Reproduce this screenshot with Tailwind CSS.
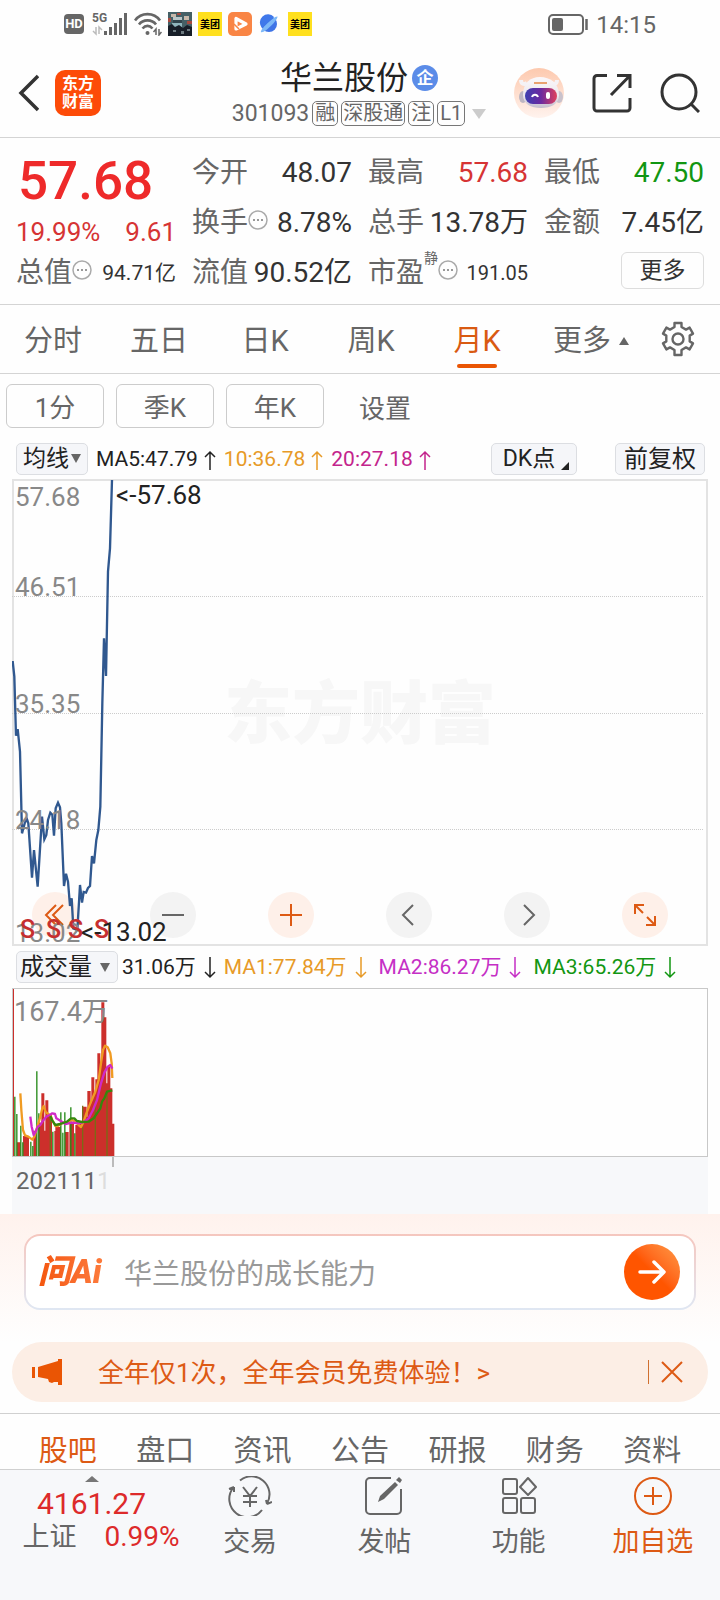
<!DOCTYPE html>
<html lang="zh-CN">
<head>
<meta charset="utf-8">
<meta name="viewport" content="width=device-width, initial-scale=1">
<title>华兰股份 301093</title>
<script src="https://cdn.jsdelivr.net/npm/@tailwindcss/browser@4"></script>
</head>
<body class="min-h-screen bg-[#fefefe] font-[Roboto,'Noto_Sans_CJK_SC',sans-serif] text-[#666]">
<div class="flex min-h-screen flex-col">

<!-- Status bar -->
<div class="flex h-12 items-center justify-between pl-16 pr-16">
  <div class="flex items-center gap-1.5">
    <span class="flex h-5 w-5 items-center justify-center rounded-sm bg-[#666] text-[13px] font-bold text-white">HD</span>
    <svg class="ml-0.5" width="36" height="24" viewBox="0 0 36 24"><text x="0" y="10" font-size="12" font-weight="700" fill="#666">5G</text><path d="M4 15v7l-3-3M7 22v-7l3 3" fill="none" stroke="#bbb" stroke-width="1.5"/><path d="M13.500 19v4M18.500 15v8M23.500 11v12M28.500 6v17M33.500 1v22" stroke="#666" stroke-width="3"/></svg>
    <svg width="28" height="24" viewBox="0 0 28 24" fill="none" stroke="#666" stroke-width="2.600"><path d="M1 8.500C7 0 20 0 26 8.500M5 12.500c4-5.500 13-5.500 17 0M8.500 16.500c3-3.500 7-3.500 10 0"/><circle cx="13.500" cy="21" r="2" fill="#666" stroke="none"/><path d="M22 23v-6l-2.500 3M25 17v6l2.500-3" stroke-width="1.500"/></svg>
    <svg width="24" height="24" viewBox="0 0 24 24"><path fill="#456066" d="M0 0h24v24H0z"/><path fill="#c7b8aa" d="M3 2h5v3H3zM16 4h5v4h-5z"/><path fill="#a64a40" d="M0 6h3v4H0zM19 9h5v3h-5zM9 1h4v2H9z"/><path fill="#b9c6c8" d="M5 5h9v3H5z"/><path fill="#31454e" d="M5 8h9v3H5z"/><path fill="#8fb5bd" d="M4 11h10v4H4z"/><path fill="#171e28" d="M0 14l4-2 3 3 4-2 4 3 4-3 5 2v9H0z"/><path fill="#6c7a80" d="M5 18h3v2H5zM13 19h3v3h-3zM19 17h3v2h-3z"/></svg>
    <span class="flex h-6 w-6 items-center justify-center bg-[#ffe01e] text-[10px] font-bold text-black">美团</span>
    <svg width="24" height="24" viewBox="0 0 24 24"><rect width="24" height="24" rx="5" fill="#f98545"/><path d="M8 6.500v10.500l10-5z" fill="none" stroke="#fff" stroke-width="3.200" stroke-linejoin="round"/><path d="M6 12l5 5" stroke="#f98545" stroke-width="1.500"/></svg>
    <svg width="24" height="24" viewBox="0 0 24 24"><circle cx="11" cy="12" r="8" fill="#3f74e6"/><path d="M3 20C1 18 17 3 19.500 4.500 20 8 6 22 3 20z" fill="#7db8f7"/><path d="M4 16a8 8 0 0 1 12-11z" fill="#3f78ea"/></svg>
    <span class="flex h-6 w-6 items-center justify-center bg-[#ffe01e] text-[10px] font-bold text-black">美团</span>
  </div>
  <div class="flex items-center gap-2 pt-0.5">
    <svg width="40" height="22" viewBox="0 0 40 22"><rect x="1" y="1" width="34" height="19" rx="4" fill="none" stroke="#666" stroke-width="2"/><rect x="4" y="4" width="11" height="13" rx="2" fill="#666"/><path d="M38.500 5v11" stroke="#666" stroke-width="2.500"/></svg>
    <span class="text-[24px] leading-6">14:15</span>
  </div>
</div>

<!-- Title bar -->
<header class="grid h-[90px] grid-cols-[1fr_auto_1fr] items-center border-b border-[#d4d4d4] pl-[18px] pr-5">
  <div class="flex items-center gap-4">
    <button aria-label="返回"><svg width="21" height="38" viewBox="0 0 21 38" fill="none" stroke="#333" stroke-width="3.500"><path d="M20 2L3 19l17 17"/></svg></button>
    <a href="#" class="flex h-[46px] w-[46px] flex-col items-center justify-center rounded-[10px] bg-[#fd4b08] text-[16px] leading-[18px] font-bold text-white"><span>东方</span><span>财富</span></a>
  </div>
  <div class="flex flex-col items-center gap-1">
    <h1 class="flex items-center gap-1 text-[32px] leading-[38px] text-[#222]">华兰股份<span class="flex h-[26px] w-[26px] items-center justify-center rounded-full bg-[#5b8ce8] text-[17px] font-bold leading-none text-white">企</span></h1>
    <div class="flex items-center gap-[3px] text-[20px] leading-[23px]">
      <span class="text-[23px]">301093</span>
      <span class="rounded-[5px] border border-[#777] px-0.5">融</span>
      <span class="rounded-[5px] border border-[#777] px-px">深股通</span>
      <span class="rounded-[5px] border border-[#777] px-0.5">注</span>
      <span class="rounded-[5px] border border-[#777] px-0.5">L1</span>
      <svg class="ml-1" width="14" height="10" viewBox="0 0 14 10"><path d="M0 0h14L7 10z" fill="#ccc"/></svg>
    </div>
  </div>
  <div class="flex items-center justify-end gap-7">
    <button aria-label="智能助手"><svg width="50" height="50" viewBox="0 0 50 50"><defs><linearGradient id="face" x1="0" x2="1"><stop offset="0" stop-color="#3c3fb0"/><stop offset=".5" stop-color="#6b2aa0"/><stop offset="1" stop-color="#e0405c"/></linearGradient><linearGradient id="halo" x1="0" y1="0" x2="0" y2="1"><stop offset="0" stop-color="#fdc9ae"/><stop offset="1" stop-color="#fff3ee"/></linearGradient><linearGradient id="shell" x1="0" y1="0" x2="0" y2="1"><stop offset="0" stop-color="#fbf8fa"/><stop offset=".6" stop-color="#ece8ee"/><stop offset="1" stop-color="#c4becd"/></linearGradient></defs><circle cx="25" cy="25" r="25" fill="url(#halo)"/><path d="M7 12c0 4 3 5 6 3M43 12c0 4-3 5-6 3" fill="none" stroke="#f5f2f5" stroke-width="4"/><ellipse cx="9" cy="29" rx="4" ry="6" fill="#bdb6c2"/><ellipse cx="45" cy="29" rx="4" ry="6" fill="#c9c2cc"/><path d="M9 27C9 15 16 9 26 9s19 6 19 18c0 9-8 13-18 13S9 36 9 27z" fill="url(#shell)"/><path d="M20 14h13v2H20z" fill="#e9a270"/><rect x="11" y="20" width="32" height="16" rx="8" fill="url(#face)"/><path d="M18 29c1-3 5-3 6 0" fill="none" stroke="#fff" stroke-width="2"/><rect x="32" y="24" width="4" height="7" rx="2" fill="#fff"/></svg></button>
    <button aria-label="分享"><svg width="40" height="40" viewBox="0 0 40 40" fill="none" stroke="#333" stroke-width="3"><path d="M15 2.500H5a3 3 0 0 0-3 3V35a3 3 0 0 0 3 3h30a3 3 0 0 0 3-3V25M25 2.500h13V15M38 2.500L19 22"/></svg></button>
    <button aria-label="搜索"><svg width="40" height="40" viewBox="0 0 40 40" fill="none" stroke="#333" stroke-width="3"><circle cx="19" cy="19" r="17"/><path d="M31 31l8 8"/></svg></button>
  </div>
</header>

<!-- Quote summary -->
<section class="grid h-[167px] grid-cols-4 grid-rows-[50px_50px_50px] gap-x-4 border-b border-[#d4d4d4] px-4 pt-2.5 text-[28px] leading-[50px] whitespace-nowrap">
  <div class="row-span-2 flex flex-col">
    <strong class="pl-0.5 text-[53px] leading-[66px] font-medium text-[#ee2a2a]">57.68</strong>
    <div class="flex justify-between text-[26px] leading-9 text-[#d63434]"><span>19.99%</span><span>9.61</span></div>
  </div>
  <div class="flex justify-between"><span>今开</span><span class="text-[#333]">48.07</span></div>
  <div class="flex justify-between"><span>最高</span><span class="text-[#d63434]">57.68</span></div>
  <div class="flex justify-between"><span>最低</span><span class="text-[#129612]">47.50</span></div>
  <div class="flex justify-between"><span class="flex">换手<svg class="mt-3" width="20" height="20" viewBox="0 0 20 20"><circle cx="10" cy="10" r="9" fill="none" stroke="#aaa" stroke-width="1.500"/><path d="M5 9h2v2H5zM9 9h2v2H9zM13 9h2v2h-2z" fill="#999"/></svg></span><span class="text-[#333]">8.78%</span></div>
  <div class="flex justify-between"><span>总手</span><span class="text-[#333]">13.78万</span></div>
  <div class="flex justify-between"><span>金额</span><span class="text-[#333]">7.45亿</span></div>
  <div class="flex justify-between"><span class="flex">总值<svg class="mt-3" width="20" height="20" viewBox="0 0 20 20"><circle cx="10" cy="10" r="9" fill="none" stroke="#aaa" stroke-width="1.500"/><path d="M5 9h2v2H5zM9 9h2v2H9zM13 9h2v2h-2z" fill="#999"/></svg></span><span class="text-[21px] text-[#333]">94.71亿</span></div>
  <div class="flex justify-between"><span>流值</span><span class="text-[#333]">90.52亿</span></div>
  <div class="flex justify-between"><span class="flex">市盈<sup class="top-0 text-[14px] leading-5">静</sup><svg class="mt-3" width="20" height="20" viewBox="0 0 20 20"><circle cx="10" cy="10" r="9" fill="none" stroke="#aaa" stroke-width="1.500"/><path d="M5 9h2v2H5zM9 9h2v2H9zM13 9h2v2h-2z" fill="#999"/></svg></span><span class="text-[20px] text-[#333]">191.05</span></div>
  <div class="flex items-start justify-end pt-1"><button class="h-[37px] w-[83px] rounded-md border border-[#ddd] text-[23px] leading-[33px] text-[#333]">更多</button></div>
</section>

<!-- Period tabs -->
<nav class="grid h-[69px] grid-cols-[repeat(6,106fr)_84fr] border-b border-[#d4d4d4] pt-1 text-[29px] leading-[64px]">
  <button>分时</button>
  <button>五日</button>
  <button>日K</button>
  <button>周K</button>
  <button class="relative text-[#d95a12]">月K<span class="absolute bottom-[5px] left-1/2 h-1 w-10 -translate-x-1/2 rounded-full bg-[#ea5504]"></span></button>
  <button class="flex items-center justify-center gap-2 pl-4">更多<svg width="10" height="8" viewBox="0 0 10 8"><path d="M0 8h10L5 0z" fill="#666"/></svg></button>
  <button class="flex items-center justify-center pb-1" aria-label="图表设置"><svg width="36" height="36" viewBox="0 0 36 36" fill="none" stroke="#666" stroke-width="2.400" stroke-linejoin="round"><path d="M14.500 2h7v4l4.500 2.600 3.600-2 3.400 6-3.300 2v5.800l3.300 2-3.400 6-3.600-2L21.500 29v5h-7v-5L10 26.400l-3.600 2-3.400-6 3.300-2v-5.800l-3.300-2 3.400-6 3.600 2L14.500 6z"/><circle cx="18" cy="18" r="5.500"/></svg></button>
</nav>

<!-- Custom periods -->
<div class="flex gap-3 px-1.5 pt-2.5 text-[26px] leading-[42px]">
  <button class="h-11 w-[98px] rounded-md border border-[#ccc] pt-0.5">1分</button>
  <button class="h-11 w-[98px] rounded-md border border-[#ccc] pt-0.5">季K</button>
  <button class="h-11 w-[98px] rounded-md border border-[#ccc] pt-0.5">年K</button>
  <button class="h-11 w-[98px] pt-1">设置</button>
</div>

<!-- Moving averages -->
<div class="flex h-[51px] items-center gap-2 pl-4 pr-[15px] pt-2.5 text-[21px] whitespace-nowrap">
  <button class="flex h-8 w-[72px] items-center justify-center gap-0.5 rounded-[5px] border border-[#dcdee2] bg-[#f5f6f9] text-[23px] leading-7 text-[#222]">均线<svg width="10" height="9" viewBox="0 0 10 9"><path d="M0 0h10L5 9z" fill="#666"/></svg></button>
  <span class="flex items-center gap-1.5 pt-0.5 text-[#222]">MA5:47.79<svg width="12" height="20" viewBox="0 0 12 20" fill="none" stroke="currentColor" stroke-width="1.500"><path d="M6 20V2M1 7l5-5 5 5"/></svg></span>
  <span class="flex items-center gap-1.5 pt-0.5 text-[#e79a27]">10:36.78<svg width="12" height="20" viewBox="0 0 12 20" fill="none" stroke="currentColor" stroke-width="1.500"><path d="M6 20V2M1 7l5-5 5 5"/></svg></span>
  <span class="flex items-center gap-1.5 pt-0.5 text-[#c3248c]">20:27.18<svg width="12" height="20" viewBox="0 0 12 20" fill="none" stroke="currentColor" stroke-width="1.500"><path d="M6 20V2M1 7l5-5 5 5"/></svg></span>
  <button class="ml-auto flex h-8 w-[86px] items-center justify-center gap-1.5 rounded-[5px] border border-[#dcdee2] bg-[#f5f6f9] pl-1 text-[23px] leading-7 text-[#222]">DK点<svg class="mt-3.5" width="8" height="8" viewBox="0 0 8 8"><path d="M8 0v8H0z" fill="#222"/></svg></button>
  <button class="ml-[30px] h-8 w-[90px] rounded-[5px] border border-[#dcdee2] bg-[#f5f6f9] text-[24px] leading-7 text-[#222]">前复权</button>
</div>

<!-- Price chart -->
<div class="relative mx-3 h-[467px] border-2 border-[#e3e3e3]">
  <div class="flex h-full items-center justify-center pt-1 text-[68px] font-black text-[#f7f7f7]">东方财富</div>
  <div class="absolute bottom-1.5 left-[18px] right-[38px] flex justify-between">
    <button aria-label="最早" class="flex h-[46px] w-[46px] items-center justify-center rounded-full bg-[#fef0e9]"><svg width="22" height="22" viewBox="0 0 22 22" fill="none" stroke="#dd5a14" stroke-width="2"><path d="M12 1L2 11l10 10M19 1L9 11l10 10"/></svg></button>
    <button aria-label="缩小" class="flex h-[46px] w-[46px] items-center justify-center rounded-full bg-[#f3f3f3]"><svg width="22" height="22" viewBox="0 0 22 22" stroke="#666" stroke-width="2"><path d="M0 11h22"/></svg></button>
    <button aria-label="放大" class="flex h-[46px] w-[46px] items-center justify-center rounded-full bg-[#fef0e9]"><svg width="22" height="22" viewBox="0 0 22 22" stroke="#dd5a14" stroke-width="2"><path d="M0 11h22M11 0v22"/></svg></button>
    <button aria-label="左移" class="flex h-[46px] w-[46px] items-center justify-center rounded-full bg-[#f3f3f3]"><svg width="22" height="22" viewBox="0 0 22 22" fill="none" stroke="#666" stroke-width="2"><path d="M15 1L5 11l10 10"/></svg></button>
    <button aria-label="右移" class="flex h-[46px] w-[46px] items-center justify-center rounded-full bg-[#f3f3f3]"><svg width="22" height="22" viewBox="0 0 22 22" fill="none" stroke="#666" stroke-width="2"><path d="M8 1l10 10L8 21"/></svg></button>
    <button aria-label="全屏" class="flex h-[46px] w-[46px] items-center justify-center rounded-full bg-[#fef0e9]"><svg width="22" height="22" viewBox="0 0 22 22" fill="none" stroke="#dd5a14" stroke-width="2"><path d="M1 10V1h9M1 1l8 8M12 21h9v-9M21 21l-8-8"/></svg></button>
  </div>
  <svg class="pointer-events-none absolute -top-0.5 -left-0.5 overflow-visible" width="100%" height="467" font-size="26">
    <g stroke="#ccc" stroke-dasharray="1 1"><line y1="117.500" x2="100%" y2="117.500"/><line y1="234.500" x2="100%" y2="234.500"/><line y1="350.500" x2="100%" y2="350.500"/></g>
    <svg width="104" height="466" viewBox="36 27 312 1398"><polyline fill="none" stroke="#30588f" stroke-width="7" points="38,573 43,620 48,797 53,777 60,845 66,1090 74,1060 80,1045 85,1060 96,1223 102,1140 113,1250 126,1040 133,1108 139,1095 144,1050 151,1028 157,1034 162,1097 167,1015 174,998 180,1012 184,1060 192,1248 198,1211 204,1235 210,1308 215,1285 220,1375 232,1380 240,1245 246,1298 251,1266 258,1268 264,1254 270,1248 276,1158 282,1180 289,1110 295,1080 301,1010 307,700 312,505 318,618 324,305 330,235 336,30"/></svg>
    <g fill="#888"><text x="3" y="27">57.68</text><text x="3" y="117">46.51</text><text x="3" y="234">35.35</text><text x="3" y="350">24.18</text><text x="3" y="463">13.02</text></g>
    <g fill="#c62f2f" font-size="25" font-weight="500"><text x="8" y="459">S</text><text x="34" y="459">S</text><text x="56" y="459">S</text><text x="82" y="459">S</text></g>
    <g fill="#222"><text x="104" y="25">&lt;-57.68</text><text x="69" y="462">&lt;-13.02</text></g>
  </svg>
</div>

<!-- Volume indicators -->
<div class="flex h-[42px] items-center gap-2 pl-4 text-[21px] whitespace-nowrap">
  <button class="flex h-8 w-[102px] items-center justify-center gap-2 rounded-[5px] border border-[#dcdee2] bg-[#f5f6f9] pr-1 text-[24px] leading-7 text-[#222]">成交量<svg width="10" height="9" viewBox="0 0 10 9"><path d="M0 0h10L5 9z" fill="#666"/></svg></button>
  <span class="-ml-1 flex items-center gap-2 pt-0.5 text-[#222]">31.06万<svg width="12" height="22" viewBox="0 0 12 22" fill="none" stroke="currentColor" stroke-width="1.500"><path d="M6 0v20M1 15l5 5 5-5"/></svg></span>
  <span class="flex items-center gap-2 pt-0.5 text-[#e79a27]">MA1:77.84万<svg width="12" height="22" viewBox="0 0 12 22" fill="none" stroke="currentColor" stroke-width="1.500"><path d="M6 0v20M1 15l5 5 5-5"/></svg></span>
  <span class="ml-1 flex items-center gap-2 pt-0.5 text-[#c52fc5]">MA2:86.27万<svg width="12" height="22" viewBox="0 0 12 22" fill="none" stroke="currentColor" stroke-width="1.500"><path d="M6 0v20M1 15l5 5 5-5"/></svg></span>
  <span class="ml-1 flex items-center gap-2 pt-0.5 text-[#129612]">MA3:65.26万<svg width="12" height="22" viewBox="0 0 12 22" fill="none" stroke="currentColor" stroke-width="1.500"><path d="M6 0v20M1 15l5 5 5-5"/></svg></span>
</div>

<!-- Volume chart -->
<div class="mx-3 h-[169px] border border-[#c8c8c8]">
  <svg width="100%" height="167">
    <svg width="104" height="167" viewBox="38 117 312 501">
      <path fill="#cc2f2b" d="M37 117h4v501h-4zM50 577h11v41H50zM68 558h18v60H68zM99 542h10v76H99zM114 518h9v100h-9zM123 430h9v188h-9zM132 542h4v76h-4zM135 451h9v167h-9zM144 492h11v126h-11zM162 543h4v75h-4zM165 531h16v87h-16zM194 546h11v72h-11zM207 520h14v98h-14zM225 525h12v93h-12zM236 520h12v98h-12zM248 470h11v148h-11zM259 500h3v118h-3zM261 423h10v195h-10zM270 460h4v158h-4zM273 382h9v236h-9zM282 430h4v188h-4zM285 388h6v230h-6zM291 310h9v308h-9zM300 340h4v278h-4zM303 157h9v461h-9zM312 202h6v416h-6zM318 400h3v218h-3zM321 350h9v268h-9zM330 415h6v203h-6zM336 521h6v97h-6z"/>
      <path stroke="#258a18" stroke-width="4" d="M43.500 440v178M49.500 492v126M61.500 527v91M67.500 577v41M91.500 575v43M97.500 588v30M109.500 364v254M115.500 490v128M157.500 545v73M181.500 487v131M187.500 548v70M193.500 487v131M211.500 472v146M223.500 550v68"/>
      <path stroke="#7b6a16" stroke-width="4" d="M247 467v151M285 450v168M320 425v193M150 495v123"/>
      <g fill="none" stroke-width="7" stroke-linejoin="round"><polyline stroke="#f09b22" points="60,430 63,480 68,540 74,556 84,560 96,569 102,560 108,540 114,520 120,500 126,475 130,468 136,486 144,492 150,495 156,510 165,528 172,528 185,519 200,517 215,510 225,515 235,525 242,531 250,515 258,490 270,460 285,425 295,390 302,340 308,300 314,287 322,292 330,310 334,340 336,384"/><polyline stroke="#d02ac6" points="90,500 94,530 100,555 106,545 112,530 120,525 128,512 138,500 148,495 156,490 164,492 168,505 180,512 195,522 215,518 235,520 250,516 265,505 278,480 290,450 302,400 312,368 322,350 330,345 336,356"/><polyline stroke="#34880c" points="150,498 156,512 165,525 180,522 200,515 212,505 222,505 230,513 245,516 265,515 280,505 290,490 300,475 305,455 312,445 320,425 336,421"/></g>
    </svg>
    <text x="1" y="32" font-size="27" fill="#888">167.4万</text>
  </svg>
</div>
<div class="mx-3 flex h-[57px] items-start bg-[#f7f8fa] text-[24px]">
  <span class="pt-1.5 pl-1">202111</span><span class="w-[15px] pt-1.5 text-[#ddd]">1</span>
  <span class="h-2.5 w-0.5 bg-[#bbb]"></span>
</div>

<!-- AI question box -->
<section class="bg-linear-to-b from-[#fff2ed] to-[#fefefe] px-6 pt-5 pb-8">
  <form class="rounded-2xl bg-linear-to-b from-[#f5c6be] to-[#dfe7f3] p-0.5">
    <div class="flex h-[72px] items-center rounded-[14px] bg-white pl-3 pr-3.5">
      <label for="ask" class="w-[86px] bg-linear-to-r from-[#f4560b] to-[#ff8546] bg-clip-text text-[33px] leading-10 font-black text-transparent italic">问Ai</label>
      <input id="ask" type="text" placeholder="华兰股份的成长能力" class="h-12 min-w-0 flex-1 pt-1 text-[28px] text-[#333] outline-none placeholder:text-[#999]">
      <button type="button" aria-label="提问" class="flex h-14 w-14 items-center justify-center rounded-full bg-linear-to-tr from-[#ff5500] from-50% to-[#ff9a45]"><svg width="28" height="26" viewBox="0 0 28 26" fill="none" stroke="#fff" stroke-width="3.500" stroke-linecap="round" stroke-linejoin="round"><path d="M2 13h23M16 3l10 10-10 10"/></svg></button>
    </div>
  </form>
</section>

<!-- Membership banner -->
<div class="mx-3 mb-[11px] flex h-[60px] items-center rounded-full bg-[#fceee5] pl-5 pr-[25px] text-[26px] text-[#dd5a14]">
  <svg width="31" height="26" viewBox="0 0 31 26" fill="#ea5504"><path d="M0 8h3v11H0zM6 8L26 2V0h4v26h-4v-3h-4l-2 1-3-1-1-3-5-1-5-1z"/></svg>
  <a href="#" class="ml-[35px] pt-0.5 whitespace-pre">全年仅1次，全年会员免费体验！&gt;</a>
  <span class="ml-auto h-6 w-px bg-[#d07030]"></span>
  <button aria-label="关闭" class="ml-3"><svg width="22" height="22" viewBox="0 0 22 22" stroke="#dd5a14" stroke-width="2"><path d="M1 1l20 20M21 1L1 21"/></svg></button>
</div>

<!-- Content tabs -->
<nav class="flex h-[57px] border-y border-[#d0d0d0] px-[19px] pt-2 text-center text-[29px] leading-[58px] whitespace-nowrap">
  <a href="#" class="flex-1 text-[#dd5a14]">股吧</a>
  <a href="#" class="flex-1">盘口</a>
  <a href="#" class="flex-1">资讯</a>
  <a href="#" class="flex-1">公告</a>
  <a href="#" class="flex-1">研报</a>
  <a href="#" class="flex-1">财务</a>
  <a href="#" class="flex-1">资料</a>
</nav>

<!-- Bottom bar -->
<footer class="flex flex-1 items-start bg-[#f7f8fa] pb-10 text-[27px]">
  <button class="flex w-[183px] flex-col items-center pt-1.5">
    <svg width="14" height="6" viewBox="0 0 14 6"><path d="M0 6h14L7 0z" fill="#777"/></svg>
    <span class="mt-1.5 text-[30px] leading-[32px] text-[#dd2a2a]">4161.27</span>
    <span class="flex gap-7 pl-5 leading-[34px]"><span>上证</span><span class="w-[76px] text-left text-[28px] text-[#dd2a2a]">0.99%</span></span>
  </button>
  <button class="flex flex-1 flex-col items-center gap-2 pt-1.5">
    <svg width="44" height="40" viewBox="0 0 44 40" fill="none" stroke="#666" stroke-width="2"><path d="M12 4.500a18 18 0 0 1 27 23M39 28l-1-4M39 28l5-2M34 34A18 18 0 0 1 5 12M6 11v5M6 11l-5 2M15 11l7 9 7-9M22 20v11M15 20h14M15 26h14"/></svg>
    <span class="leading-9">交易</span>
  </button>
  <button class="flex flex-1 flex-col items-center gap-2 pt-1.5">
    <svg width="38" height="40" viewBox="0 0 38 40" fill="none" stroke="#666" stroke-width="2"><path d="M26 2H5a4 4 0 0 0-4 4v28a4 4 0 0 0 4 4h27a4 4 0 0 0 4-4V13"/><path d="M13 26l2-6L30 6l3 3-14 14z" fill="#666" stroke="none"/><path d="M31 4l3-3 3 3-2 3z" fill="#666" stroke="none"/></svg>
    <span class="leading-9">发帖</span>
  </button>
  <button class="flex flex-1 flex-col items-center gap-2 pt-1.5">
    <svg width="36" height="40" viewBox="0 0 36 40" fill="none" stroke="#666" stroke-width="2"><rect x="2" y="3" width="14" height="15" rx="2"/><rect x="2" y="22" width="14" height="15" rx="2"/><rect x="20" y="22" width="14" height="15" rx="2"/><path d="M27 2l8 9-8 8-8-8z" stroke-linejoin="round"/></svg>
    <span class="leading-9">功能</span>
  </button>
  <button class="flex flex-1 flex-col items-center gap-2 pt-1.5 text-[#dd5a14]">
    <svg width="40" height="40" viewBox="0 0 40 40" fill="none" stroke="#dd5a14" stroke-width="2"><circle cx="20" cy="20" r="18"/><path d="M11 20h18M20 11v18"/></svg>
    <span class="leading-9">加自选</span>
  </button>
</footer>
</div>
</body>
</html>
